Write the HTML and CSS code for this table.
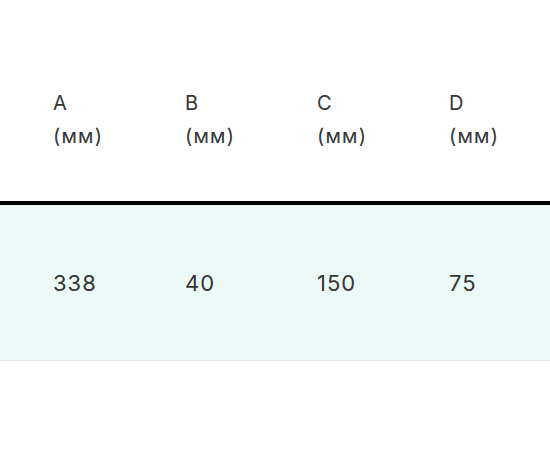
FILE: index.html
```html
<!DOCTYPE html>
<html lang="ru">
<head>
<meta charset="utf-8">
<link rel="stylesheet" href="styles.css">
</head>
<body>
<div class="table">
  <div class="row head">
    <div class="cell">A<br>(мм)</div>
    <div class="cell">B<br>(мм)</div>
    <div class="cell">C<br>(мм)</div>
    <div class="cell">D<br>(мм)</div>
  </div>
  <div class="row body">
    <div class="cell">338</div>
    <div class="cell">40</div>
    <div class="cell">150</div>
    <div class="cell">75</div>
  </div>
</div>
</body>
</html>
```
FILE: styles.css
```css
html, body {
  margin: 0;
  background: #ffffff;
}
body {
  font-family: "Inter", "Open Sans", sans-serif;
  color: #353535;
  width: 550px;
  height: 450px;
  overflow: hidden;
}
.table {
  display: flex;
  flex-direction: column;
}
.row {
  display: grid;
  grid-template-columns: 132px 132px 132px 1fr;
  padding-left: 53px;
  box-sizing: border-box;
  width: 100%;
}
.head {
  height: 205px;
  box-sizing: border-box;
  padding-top: 87px;
  font-size: 20px;
  line-height: 33px;
  letter-spacing: 1.2px;
  border-bottom: 4px solid #000;
}
.body {
  height: 156px;
  box-sizing: border-box;
  align-items: center;
  background: #ebfaf7;
  border-bottom: 1px solid #dfe7e5;
  font-size: 22px;
  letter-spacing: 1px;
}
.cell {
  white-space: nowrap;
}
```
